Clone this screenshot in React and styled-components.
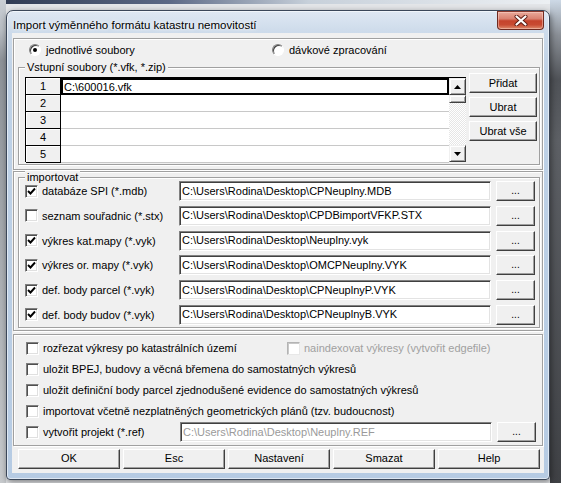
import React from 'react';
import styled, { createGlobalStyle } from 'styled-components';

const Global = createGlobalStyle`
  html, body { margin: 0; padding: 0; }
  body {
    width: 561px; height: 483px; overflow: hidden;
    font-family: "Liberation Sans", Arial, sans-serif; font-size: 11px; color: #000;
  }
  * { box-sizing: border-box; }
`;

const Desktop = styled.div`
  width: 561px; height: 483px;
  padding: 10px 11px 3px 6px;
  background:
    linear-gradient(180deg, #cdd9e6 0, #8a8f96 35px, #4f5257 80px, #5d6065 140px, #3f4145 100%) right top / 11px 100% no-repeat,
    linear-gradient(180deg, #c9ced4 0, #b9bec4 30px, #8e9399 60px, #c7cacd 100%) left top / 6px 100% no-repeat,
    linear-gradient(90deg, #2f3a52 0, #5b6885 30%, #c7d0da 55%, #eef1f4 100%) left top / 100% 4px no-repeat,
    #e3e5e8;
`;

const Window = styled.div`
  width: 544px; height: 470px;
  display: flex; flex-direction: column;
  padding: 0 5px 6px 5px;
  border: 1px solid #3b4759;
  border-radius: 7px 7px 4px 4px;
  background: linear-gradient(180deg, #dfe8f3 0, #ccdaea 22px, #bfd2e7 60px, #b6cbe3 100%);
  box-shadow: inset 0 0 0 1px rgba(255,255,255,.55), 1px 2px 6px rgba(0,0,0,.45);
`;

const TitleBar = styled.div`
  height: 22px; flex: none;
  display: flex; align-items: flex-start; justify-content: space-between;
`;

const TitleText = styled.span`
  font-family: "Liberation Sans", Arial, sans-serif; font-size: 11.5px; line-height: 15px;
  padding: 7px 0 0 1px; color: #000;
  text-shadow: 0 0 6px rgba(255,255,255,.95), 0 0 3px rgba(255,255,255,.9);
`;

const CloseButton = styled.div`
  width: 47px; height: 19px;
  display: flex; align-items: center; justify-content: center;
  border: 1px solid #6e2a20; border-top-color: #8a3a2e;
  border-radius: 0 0 4px 4px;
  background: linear-gradient(180deg, #e9a99a 0, #d98170 40%, #c5432c 52%, #c84a32 75%, #dd8a6c 100%);
  box-shadow: inset 0 0 0 1px rgba(255,220,210,.45);
`;

const Client = styled.div`
  flex: 1;
  background: #f0f0f0;
  padding: 5px 1px 0 1px;
  display: flex; flex-direction: column;
`;

const Panel = styled.div`
  border: 1px solid #a0a0a0;
  box-shadow: inset 1px 1px 0 #fff, 1px 1px 0 #fff;
  margin-top: ${p => p.$mt || 0}px;
  padding: ${p => p.$pad};
  display: flex; flex-direction: column;
`;

const RadioRow = styled.div`
  height: 22px; display: flex; align-items: center;
  padding-left: 11px;
`;

const RadioItem = styled.label`
  display: flex; align-items: center; gap: 5px;
  width: ${p => p.$w || 'auto'};
`;

const RadioCircle = styled.span`
  width: 12px; height: 12px; border-radius: 50%;
  border: 1px solid; border-color: #808080 #fff #fff #808080;
  background: #fff;
  box-shadow: inset 1px 1px 0 #404040;
  display: flex; align-items: center; justify-content: center;
  &::after {
    content: ''; width: 4px; height: 4px; border-radius: 50%;
    background: ${p => (p.$on ? '#000' : 'transparent')};
  }
`;

const GroupBox = styled.div`
  position: relative;
  margin-top: ${p => p.$mt}px;
  border: 1px solid #a0a0a0;
  box-shadow: inset 1px 1px 0 #fff, 1px 1px 0 #fff;
  padding: ${p => p.$pad};
`;

const GroupLabel = styled.span`
  position: absolute; left: 6px; top: -7px;
  padding: 0 2px; background: #f0f0f0; line-height: 13px;
`;

const FilesRow = styled.div`
  display: flex; align-items: flex-start; gap: 3px;
`;

const GridBox = styled.div`
  margin-top: 4px;
  width: 441px; height: 85px;
  display: flex;
  border-top: 1px solid #000; border-left: 1px solid #000;
`;

const Table = styled.div`
  flex: 1;
  display: grid; grid-template-columns: 35px 1fr; grid-auto-rows: 17px;
  background: #fff;
`;

const NumCell = styled.div`
  background: #f0f0f0;
  border-right: 1px solid #000; border-bottom: 1px solid #000;
  box-shadow: inset 1px 1px 0 #fff;
  display: flex; align-items: center; justify-content: center;
  line-height: 13px; padding-top: 1px;
`;

const DataCell = styled.div`
  background: #fff;
  border-bottom: 1px solid ${p => (p.$focus ? '#000' : '#c8c8c8')};
  ${p => p.$focus && 'box-shadow: inset 0 0 0 2px #000; border-bottom: none;'}
  display: flex; align-items: center;
  padding-left: 3px; line-height: 13px; padding-top: 1px;
`;

const ScrollBar = styled.div`
  width: 17px; display: flex; flex-direction: column;
  background: repeating-conic-gradient(#fff 0 25%, #e6e6e6 0 50%) 0 0 / 2px 2px;
`;

const ScrollBtn = styled.div`
  width: 17px; height: 17px; flex: none;
  background: #f0f0f0;
  border: 1px solid; border-color: #f0f0f0 #404040 #404040 #f0f0f0;
  box-shadow: inset 1px 1px 0 #fff, inset -1px -1px 0 #a0a0a0;
  display: flex; align-items: center; justify-content: center;
`;

const Thumb = styled.div`
  height: 8px; flex: none;
  background: #f0f0f0;
  border: 1px solid; border-color: #f0f0f0 #404040 #404040 #f0f0f0;
  box-shadow: inset 1px 1px 0 #fff, inset -1px -1px 0 #a0a0a0;
`;

const Track = styled.div` flex: 1; `;

const SideButtons = styled.div`
  display: flex; flex-direction: column; gap: 4px; width: 68px;
`;

const Button = styled.div`
  height: ${p => p.$h || 20}px;
  width: ${p => (p.$w ? `${p.$w}px` : 'auto')};
  flex: ${p => (p.$grow ? 1 : 'none')};
  background: #f0f0f0;
  border: 1px solid; border-color: #fff #404040 #404040 #fff;
  box-shadow: inset -1px -1px 0 #a0a0a0, inset 1px 1px 0 #f0f0f0;
  display: flex; align-items: center; justify-content: center;
  font-size: ${p => p.$fs || 11}px;
  padding-bottom: 1px;
`;

const ImportRows = styled.div`
  display: flex; flex-direction: column; gap: 4.8px;
`;

const Row = styled.div`
  height: ${p => p.$h || 20}px;
  display: flex; align-items: center;
`;

const CheckLabel = styled.label`
  display: flex; align-items: center; gap: 4px;
  width: ${p => (p.$w ? `${p.$w}px` : 'auto')};
  color: ${p => (p.$disabled ? '#a0a0a0' : '#000')};
  white-space: nowrap;
`;

const CheckBox = styled.span`
  width: 13px; height: 13px; flex: none;
  background: #fff;
  border: 1px solid; border-color: ${p => (p.$disabled ? '#b4b4b4 #e8e8e8 #e8e8e8 #b4b4b4' : '#808080 #fff #fff #808080')};
  box-shadow: ${p => (p.$disabled ? 'inset 1px 1px 0 #c8c8c8' : 'inset 1px 1px 0 #505050, inset -1px -1px 0 #e0e0e0')};
  display: flex; align-items: center; justify-content: center;
`;

const TextBox = styled.div`
  width: 312px; height: 20px;
  background: #fff;
  border: 1px solid; border-color: #808080 #fff #fff #808080;
  box-shadow: inset 1px 1px 0 #404040, inset -1px -1px 0 #e3e3e3;
  display: flex; align-items: center;
  padding: 0 0 0 2px; line-height: 13px;
  color: ${p => (p.$disabled ? '#9a9a9a' : '#000')};
  white-space: nowrap; overflow: hidden;
`;

const Spacer = styled.div` width: ${p => p.$w}px; flex: none; `;

const ButtonRow = styled.div`
  margin-top: 3px;
  display: flex; gap: 3px;
  padding: 0 3px 0 5px;
`;

const Check = () => (
  <svg width="9" height="9" viewBox="0 0 9 9">
    <path d="M1 4 L3.5 6.5 L8 1.5" fill="none" stroke="#000" strokeWidth="1.9" />
  </svg>
);

const Checkbox = ({ checked, disabled }) => (
  <CheckBox $disabled={disabled}>{checked && <Check />}</CheckBox>
);

const Arrow = ({ up }) => (
  <svg width="7" height="4" viewBox="0 0 7 4">
    <path d={up ? 'M0 4 L3.5 0 L7 4 Z' : 'M0 0 L3.5 4 L7 0 Z'} fill="#000" />
  </svg>
);

const importRows = [
  { label: 'databáze SPI (*.mdb)', checked: true, path: 'C:\\Users\\Rodina\\Desktop\\CPNeuplny.MDB' },
  { label: 'seznam souřadnic (*.stx)', checked: false, path: 'C:\\Users\\Rodina\\Desktop\\CPDBimportVFKP.STX' },
  { label: 'výkres kat.mapy (*.vyk)', checked: true, path: 'C:\\Users\\Rodina\\Desktop\\Neuplny.vyk' },
  { label: 'výkres or. mapy (*.vyk)', checked: true, path: 'C:\\Users\\Rodina\\Desktop\\OMCPNeuplny.VYK' },
  { label: 'def. body parcel (*.vyk)', checked: true, path: 'C:\\Users\\Rodina\\Desktop\\CPNeuplnyP.VYK' },
  { label: 'def. body budov (*.vyk)', checked: true, path: 'C:\\Users\\Rodina\\Desktop\\CPNeuplnyB.VYK' },
];

const Dots = () => <Button $w={39} $fs={10}>...</Button>;

export default function App() {
  return (
    <>
      <Global />
      <Desktop>
        <Window>
          <TitleBar>
            <TitleText>Import výměnného formátu katastru nemovitostí</TitleText>
            <CloseButton>
              <svg width="14" height="11" viewBox="0 0 14 11">
                <path d="M2.5 1.5 L11.5 9.5 M11.5 1.5 L2.5 9.5" stroke="#5a1a12" strokeWidth="4" strokeLinecap="round" />
                <path d="M2.5 1.5 L11.5 9.5 M11.5 1.5 L2.5 9.5" stroke="#fff" strokeWidth="2.2" strokeLinecap="round" />
              </svg>
            </CloseButton>
          </TitleBar>
          <Client>
            <Panel $pad="0 2px 4px 4px">
              <RadioRow>
                <RadioItem $w="243px"><RadioCircle $on />jednotlivé soubory</RadioItem>
                <RadioItem><RadioCircle />dávkové zpracování</RadioItem>
              </RadioRow>
              <GroupBox $mt={6} $pad="5px 2px 2px 6px">
                <GroupLabel>Vstupní soubory (*.vfk, *.zip)</GroupLabel>
                <FilesRow>
                  <GridBox>
                    <Table>
                      {[1, 2, 3, 4, 5].map(n => (
                        <React.Fragment key={n}>
                          <NumCell>{n}</NumCell>
                          <DataCell $focus={n === 1}>{n === 1 ? 'C:\\600016.vfk' : ''}</DataCell>
                        </React.Fragment>
                      ))}
                    </Table>
                    <ScrollBar>
                      <ScrollBtn><Arrow up /></ScrollBtn>
                      <Thumb />
                      <Track />
                      <ScrollBtn><Arrow /></ScrollBtn>
                    </ScrollBar>
                  </GridBox>
                  <SideButtons>
                    <Button>Přidat</Button>
                    <Button>Ubrat</Button>
                    <Button>Ubrat vše</Button>
                  </SideButtons>
                </FilesRow>
              </GroupBox>
            </Panel>

            <Panel $mt={1} $pad="0 2px 2px 4px">
              <GroupBox $mt={5} $pad="3px 2px 2px 6px">
                <GroupLabel>importovat</GroupLabel>
                <ImportRows>
                  {importRows.map(r => (
                    <Row key={r.label}>
                      <CheckLabel $w={154}>
                        <Checkbox checked={r.checked} />
                        {r.label}
                      </CheckLabel>
                      <TextBox>{r.path}</TextBox>
                      <Spacer $w={5} />
                      <Dots />
                    </Row>
                  ))}
                </ImportRows>
              </GroupBox>
            </Panel>

            <Panel $mt={3} $pad="3px 2px 2px 12px">
              <Row $h={21}>
                <CheckLabel $w={261}><Checkbox />rozřezat výkresy po katastrálních území</CheckLabel>
                <CheckLabel $disabled><Checkbox disabled />naindexovat výkresy (vytvořit edgefile)</CheckLabel>
              </Row>
              <Row $h={21}>
                <CheckLabel><Checkbox />uložit BPEJ, budovy a věcná břemena do samostatných výkresů</CheckLabel>
              </Row>
              <Row $h={21}>
                <CheckLabel><Checkbox />uložit definiční body parcel zjednodušené evidence do samostatných výkresů</CheckLabel>
              </Row>
              <Row $h={21}>
                <CheckLabel><Checkbox />importovat včetně nezplatněných geometrických plánů (tzv. budoucnost)</CheckLabel>
              </Row>
              <Row $h={21}>
                <CheckLabel $w={154}><Checkbox />vytvořit projekt (*.ref)</CheckLabel>
                <TextBox $disabled>C:\Users\Rodina\Desktop\Neuplny.REF</TextBox>
                <Spacer $w={5} />
                <Dots />
              </Row>
            </Panel>

            <ButtonRow>
              <Button $grow>OK</Button>
              <Button $grow>Esc</Button>
              <Button $grow>Nastavení</Button>
              <Button $grow>Smazat</Button>
              <Button $grow>Help</Button>
            </ButtonRow>
          </Client>
        </Window>
      </Desktop>
    </>
  );
}
